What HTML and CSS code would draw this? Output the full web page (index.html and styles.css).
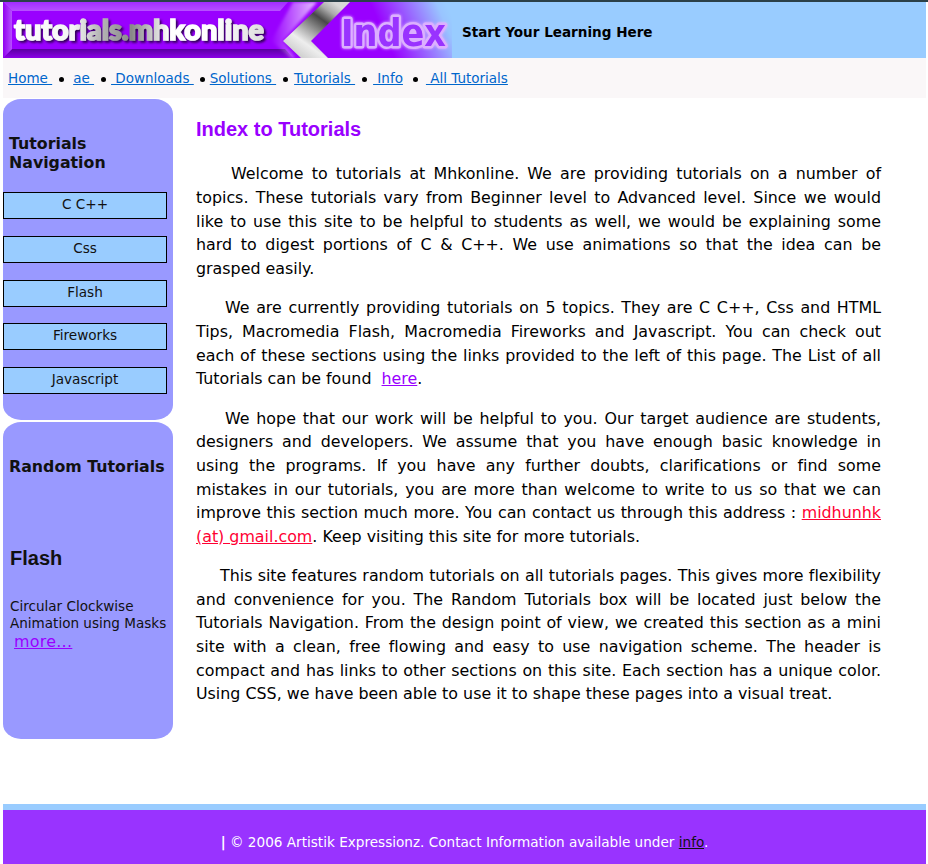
FILE: index.html
```html
<!DOCTYPE html>
<html lang="en">
<head>
<meta charset="utf-8">
<title>Index to Tutorials</title>
<link rel="stylesheet" href="styles.css">
</head>
<body>
<header class="header">
<svg class="logo" width="449" height="56" viewBox="0 0 449 56">
<defs>
<linearGradient id="bg" gradientUnits="userSpaceOnUse" x1="370" x2="449" y1="50" y2="15"><stop offset="0" stop-color="#9900ff"/><stop offset=".2" stop-color="#9900ff"/><stop offset=".9" stop-color="#99c4ff"/><stop offset="1" stop-color="#99ccff"/></linearGradient>
<linearGradient id="top" x1="0" x2="0" y1="0" y2="1"><stop offset="0" stop-color="#a22cff"/><stop offset="1" stop-color="#b650ff"/></linearGradient>
<linearGradient id="bottom" x1="0" x2="0" y1="0" y2="1"><stop offset="0" stop-color="#5a00a0"/><stop offset="1" stop-color="#8b00e8"/></linearGradient>
<linearGradient id="left" x1="0" x2="1" y1="0" y2="0"><stop offset="0" stop-color="#9100f0"/><stop offset="1" stop-color="#b650ff"/></linearGradient>
<linearGradient id="metal" gradientUnits="userSpaceOnUse" x1="330" y1="0" x2="290" y2="56"><stop offset="0" stop-color="#d8d8d8"/><stop offset=".14" stop-color="#aaaaaa"/><stop offset=".3" stop-color="#484848"/><stop offset=".5" stop-color="#999999"/><stop offset=".72" stop-color="#eeeeee"/><stop offset="1" stop-color="#c4c4c4"/></linearGradient>
<linearGradient id="word" x1="0" x2="1" y1="0" y2="0"><stop offset="0" stop-color="#fff"/><stop offset=".24" stop-color="#f4f4f4"/><stop offset=".34" stop-color="#b8b8b8"/><stop offset=".47" stop-color="#888888"/><stop offset=".62" stop-color="#fff"/><stop offset=".8" stop-color="#fff"/><stop offset="1" stop-color="#ddd"/></linearGradient>
<linearGradient id="fade" x1="0" x2="1" y1="0" y2="0"><stop offset="0" stop-color="#fff" stop-opacity="0"/><stop offset="1" stop-color="#fff" stop-opacity=".75"/></linearGradient>
<filter id="soft" x="-20%" y="-40%" width="140%" height="180%"><feGaussianBlur stdDeviation="1.5"/></filter>
<filter id="shadow" x="-10%" y="-30%" width="120%" height="170%"><feDropShadow dx="2" dy="2" stdDeviation="1" flood-color="#25004a" flood-opacity=".9"/></filter>
</defs>
<rect width="449" height="56" fill="url(#bg)"/>
<path d="M0 0H285L277 9H9Z" fill="url(#top)"/>
<path d="M0 56H290L282 47H9Z" fill="url(#bottom)"/>
<path d="M0 0L9 9V47L0 56Z" fill="url(#left)"/>
<path d="M290 0H314L280 39L292 56H288L268 39Z" fill="url(#fade)" filter="url(#soft)"/>
<path d="M321 0H347L308 39L325 56H298L280 39Z" fill="url(#metal)"/>
<text class="logo-word" x="11" y="38" textLength="250" lengthAdjust="spacingAndGlyphs" fill="url(#word)" stroke="url(#word)" stroke-width="1.6" filter="url(#shadow)">tutorials.mhkonline</text>
<text class="logo-index" x="338" y="44" textLength="105" lengthAdjust="spacingAndGlyphs">Index</text>
</svg>
<strong class="tagline">Start Your Learning Here</strong>
</header>
<nav class="topnav"><a href="#">Home&nbsp;</a><i></i><a href="#">ae&nbsp;</a><i></i><a href="#">&nbsp;Downloads&nbsp;</a><i></i><a href="#">Solutions&nbsp;</a><i></i><a href="#">Tutorials&nbsp;</a><i></i><a href="#">&nbsp;Info</a><i></i><a href="#">&nbsp;All Tutorials</a></nav>
<div class="columns">
<aside class="sidebar">
<section class="box box-nav">
<h3>Tutorials<br>Navigation</h3>
<ul><li>C C++</li><li>Css</li><li>Flash</li><li>Fireworks</li><li>Javascript</li></ul>
</section>
<section class="box box-random">
<h3>Random Tutorials</h3>
<h2>Flash</h2>
<p>Circular Clockwise<br>Animation using Masks</p>
<a class="more" href="#">more...</a>
</section>
</aside>
<main class="content">
<h1>Index to Tutorials</h1>
<p class="in1">Welcome to tutorials at Mhkonline. We are providing tutorials on a number of<br>topics. These tutorials vary from Beginner level to Advanced level. Since we would<br>like to use this site to be helpful to students as well, we would be explaining some<br>hard to digest portions of C &amp; C++. We use animations so that the idea can be<br><span class="last">grasped easily.</span></p>
<p class="in2">We are currently providing tutorials on 5 topics. They are C C++, Css and HTML<br>Tips, Macromedia Flash, Macromedia Fireworks and Javascript. You can check out<br>each of these sections using the links provided to the left of this page. The List of all<br><span class="last">Tutorials can be found&nbsp; <a class="here" href="#">here</a>.</span></p>
<p class="in2">We hope that our work will be helpful to you. Our target audience are students,<br>designers and developers. We assume that you have enough basic knowledge in<br>using the programs. If you have any further doubts, clarifications or find some<br>mistakes in our tutorials, you are more than welcome to write to us so that we can<br>improve this section much more. You can contact us through this address : <a class="mail" href="#">midhunhk</a><br><span class="last"><a class="mail" href="#">(at) gmail.com</a>. Keep visiting this site for more tutorials.</span></p>
<p class="in3">This site features random tutorials on all tutorials pages. This gives more flexibility<br>and convenience for you. The Random Tutorials box will be located just below the<br>Tutorials Navigation. From the design point of view, we created this section as a mini<br>site with a clean, free flowing and easy to use navigation scheme. The header is<br>compact and has links to other sections on this site. Each section has a unique color.<br><span class="last">Using CSS, we have been able to use it to shape these pages into a visual treat.</span></p>
</main>
</div>
<footer class="footer"><b>|</b> © 2006 Artistik Expressionz. Contact Information available under <a href="#">info</a>.</footer>
</body>
</html>
```
FILE: styles.css
```css
* { box-sizing: border-box; }
body {
  margin: 0;
  height: 864px;
  padding: 0 2px 0 3px;
  border-top: 2px solid #2b4048;
  overflow: hidden;
  display: flex;
  flex-direction: column;
  background: #fff;
  color: #000;
  font: 15.87px/23.6px "DejaVu Sans", sans-serif;
  font-variant-ligatures: none;
}
.header { display: flex; height: 56px; background: #99ccff; }
.logo { display: block; flex: none; overflow: visible; }
.logo-word { font: 900 29px "Lato", sans-serif; }
.logo-index {
  font: 700 37px "DejaVu Sans", sans-serif;
  fill: #9933ff;
  stroke: #dcb0ff;
  stroke-width: 5;
  stroke-linejoin: round;
  paint-order: stroke;
  filter: drop-shadow(0 0 1.5px #e0bcff);
}
.tagline { margin: 19px 0 0 10px; font-size: 13.55px; }
.topnav {
  display: flex;
  height: 40px;
  padding: 9px 0 0 5px;
  background: #faf7f8;
  font-size: 13.5px;
}
.topnav a { color: #0066cc; }
.topnav i { width: 5px; height: 5px; margin: 10px 6px 0 7px; border-radius: 50%; background: #000; }
.topnav i:nth-of-type(1) { margin-right: 9px; }
.topnav i:nth-of-type(2) { margin-right: 5px; }
.topnav i:nth-of-type(3) { margin-left: 6px; margin-right: 5px; }
.topnav i:nth-of-type(6) { margin-left: 10px; margin-right: 8px; }
.columns { display: flex; height: 706px; }
.sidebar { width: 170px; flex: none; padding-top: 1px; }
.box { background: #9999ff; border-radius: 18px / 15px; color: #111; overflow: hidden; }
.box-nav { height: 321px; margin-bottom: 2px; padding-top: 35px; }
.box h3 { margin: 0 0 20px 6px; font-size: 15.8px; line-height: 19px; white-space: nowrap; }
.box ul { width: 164px; margin: 0; padding: 0; list-style: none; }
.box li {
  height: 27px;
  margin-bottom: 16.8px;
  border: 1px solid #000;
  background: #99ccff;
  font-size: 13.6px;
  line-height: 23px;
  text-align: center;
}
.box-random { height: 317px; padding-top: 35px; }
.box h2 { margin: 71px 0 28px 7px; font: bold 20px/23px "Liberation Sans", sans-serif; }
.box p { margin: 0 0 0 7px; font-size: 13.55px; line-height: 17px; white-space: nowrap; }
.more { display: block; width: max-content; margin-left: 11px; color: #9900ff; line-height: 20px; letter-spacing: 0.3px; }
.content { width: 685px; margin-left: 23px; }
.content h1 { margin: 20px 0 21.4px; font: bold 20px/23px "Liberation Sans", sans-serif; color: #9900ff; }
.content p { margin: 0 0 16px; text-align: justify; text-align-last: justify; white-space: nowrap; }
.in1 { text-indent: 35px; }
.in2 { text-indent: 29px; }
.in3 { text-indent: 24px; }
.last { display: block; text-align-last: left; text-indent: 0; }
.here { color: #9900ff; }
.mail { color: #ff0033; }
.footer {
  height: 60px;
  padding-top: 21px;
  border-top: 6px solid #99ccff;
  background: #9933ff;
  color: #fff;
  font-size: 13.6px;
  text-align: center;
}
.footer a { color: #111; }
```
